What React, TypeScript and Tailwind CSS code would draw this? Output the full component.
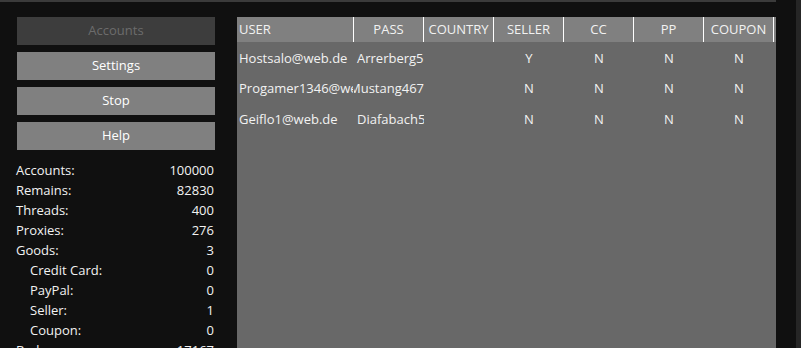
const buttons = [
  { label: "Accounts", disabled: true },
  { label: "Settings" },
  { label: "Stop" },
  { label: "Help" },
]

const stats = [
  { label: "Accounts:", value: "100000" },
  { label: "Remains:", value: "82830" },
  { label: "Threads:", value: "400" },
  { label: "Proxies:", value: "276" },
  { label: "Goods:", value: "3" },
  { label: "Credit Card:", value: "0", sub: true },
  { label: "PayPal:", value: "0", sub: true },
  { label: "Seller:", value: "1", sub: true },
  { label: "Coupon:", value: "0", sub: true },
  { label: "Bad:", value: "17167" },
]

const rows = [
  { user: "Hostsalo@web.de", pass: "Arrerberg5", seller: "Y", cc: "N", pp: "N", coupon: "N" },
  { user: "Progamer1346@web.de", pass: "Mustang467", seller: "N", cc: "N", pp: "N", coupon: "N", clip: true },
  { user: "Geiflo1@web.de", pass: "Diafabach5", seller: "N", cc: "N", pp: "N", coupon: "N" },
]

export default function App() {
  return (
    <div className="w-[801px] h-[348px] overflow-hidden bg-[#101010] flex text-[13px] text-[#f2f2f2] font-['Open_Sans',sans-serif]">
      <div className="flex-1 flex flex-col">
        {/* Top edge */}
        <div className="h-[2px] shrink-0 bg-[#3b3b3b]" />

        <div className="flex flex-1 shrink-0 pt-[15px]">
          {/* Sidebar */}
          <div className="w-[237px] shrink-0 flex flex-col">
            <div className="flex flex-col gap-[7px] pl-[17px]">
              {buttons.map((b) => (
                <button
                  key={b.label}
                  className={`w-[198px] h-[28px] shrink-0 flex items-center justify-center ${
                    b.disabled ? "bg-[#3d3d3d] text-[#6c6c6c]" : "bg-[#808080] text-white"
                  }`}
                >
                  {b.label}
                </button>
              ))}
            </div>

            <div className="flex flex-col mt-[11px] pl-[16px] w-[214px]">
              {stats.map((s) => (
                <div key={s.label} className="h-[20px] shrink-0 flex items-center justify-between">
                  <span className={s.sub ? "pl-[14px]" : ""}>{s.label}</span>
                  <span>{s.value}</span>
                </div>
              ))}
            </div>
          </div>

          {/* Table */}
          <div className="w-[539px] shrink-0 bg-[#686868] flex flex-col">
            <div className="h-[25px] shrink-0 bg-[#808080] flex">
              <div className="w-[117px] border-r border-white flex items-center pl-[2px]">USER</div>
              {["PASS", "COUNTRY", "SELLER", "CC", "PP", "COUPON"].map((h) => (
                <div key={h} className="w-[70px] border-r border-white flex items-center justify-center">
                  {h}
                </div>
              ))}
            </div>
            <div className="pt-[1px] flex flex-col">
              {rows.map((r) => (
                <div key={r.user} className="h-[30.5px] shrink-0 flex items-center whitespace-nowrap">
                  <div className="w-[116px] overflow-hidden pl-[2px] mr-[1px]">{r.user}</div>
                  <div className="w-[70px] overflow-hidden pl-[3px]">
                    <span className={r.clip ? "ml-[-8px]" : ""}>{r.pass}</span>
                  </div>
                  <div className="w-[70px]" />
                  {[r.seller, r.cc, r.pp, r.coupon].map((v, i) => (
                    <div key={i} className="w-[70px] text-center">
                      {v}
                    </div>
                  ))}
                </div>
              ))}
            </div>
          </div>
        </div>
      </div>

      {/* Right edge */}
      <div className="w-[20px] shrink-0" />
      <div className="w-[6px] shrink-0 bg-[#262626]" />
    </div>
  )
}
